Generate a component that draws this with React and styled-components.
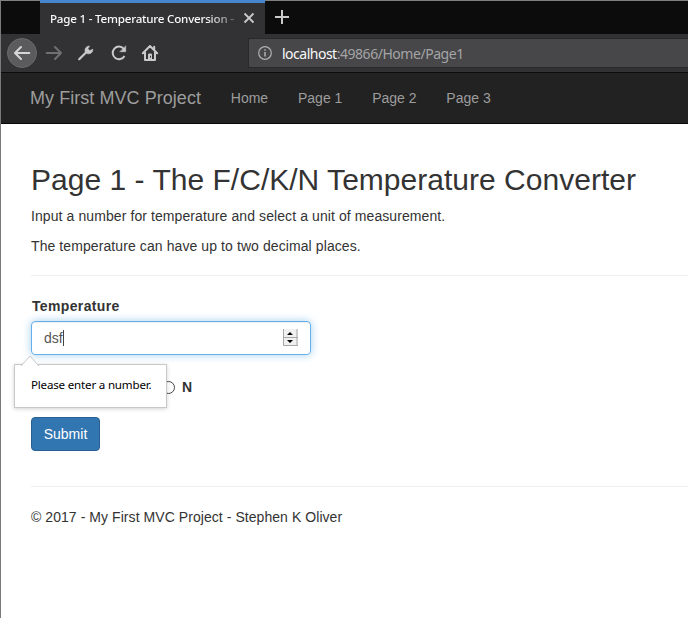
import React from 'react';
import styled, { createGlobalStyle } from 'styled-components';

const GlobalStyle = createGlobalStyle`
  * { box-sizing: border-box; }
  body { margin: 0; background: #fff; overflow: hidden; }
`;

const Window = styled.div`
  height: 618px;
  width: 688px;
  overflow: hidden;
  border-left: 1px solid #7b7b7b;
  background: #fff;
  color: #333;
  font: 14px/20px "Liberation Sans", Arial, sans-serif;
`;

const TabStrip = styled.div`
  display: flex;
  height: 34px;
  background: #0c0c0d;
  border-top: 1px solid #7f8080;
`;

const Tab = styled.div`
  display: flex;
  align-items: center;
  width: 225px;
  height: 34px;
  margin: -1px 0 0 39px;
  padding: 0 10px;
  border-top: 3px solid #4586cf;
  background: #323234;
`;

const TabTitle = styled.span`
  flex: none;
  width: 184px;
  overflow: hidden;
  white-space: nowrap;
  font: 500 11.6px/20px "Noto Sans", sans-serif;
  letter-spacing: -0.21px;
  color: #f9f9fa;
  mask-image: linear-gradient(to right, #000 156px, transparent 196px);
`;

const CloseIcon = styled.svg`
  flex: none;
  width: 12px;
  height: 12px;
  margin: -1px 0 0 9px;
`;

const PlusIcon = styled.svg`
  width: 16px;
  height: 16px;
  margin: 8px 0 0 9px;
`;

const Toolbar = styled.div`
  display: flex;
  align-items: center;
  height: 39px;
  padding-left: 6px;
  background: #323234;
  border-bottom: 1px solid #0c0c0d;
`;

const BackButton = styled.div`
  display: grid;
  place-items: center;
  width: 30px;
  height: 30px;
  border: 1px solid #6a6a6c;
  border-radius: 50%;
  background: #5b5b5d;
`;

const ToolIcon = styled.svg`
  flex: none;
  width: 18px;
  height: 18px;
  margin-left: ${(p) => p.$gap || 0}px;
  fill: none;
  stroke: ${(p) => p.$color || '#c9c9ca'};
  stroke-width: 2;
  stroke-linecap: round;
  stroke-linejoin: round;
`;

const AddressBar = styled.div`
  display: flex;
  align-items: center;
  flex: 1;
  height: 30px;
  margin-left: 89px;
  padding-left: 9px;
  background: #474749;
  border: 1px solid #29292a;
  border-right: 0;
  border-radius: 2px 0 0 2px;
`;

const InfoIcon = styled.svg`
  width: 14px;
  height: 14px;
  margin-right: 10px;
`;

const Url = styled.span`
  font: 14px/20px "Noto Sans", sans-serif;
  letter-spacing: -0.46px;
  color: #a4a4a6;
  padding-top: 1px;
`;

const Host = styled.span`
  color: #f9f9fa;
  letter-spacing: -0.5px;
`;

const Navbar = styled.nav`
  display: flex;
  align-items: center;
  height: 51px;
  padding: 0 0 0 29px;
  gap: 29.8px;
  background: #222;
  border-bottom: 1px solid #080808;
  color: #9d9d9d;
`;

const Brand = styled.span`
  font-size: 18px;
  letter-spacing: 0.05px;
`;

const NavLink = styled.span`
  font-size: 14px;
`;

const Content = styled.main`
  padding: 39px 0 0 30px;
`;

const Title = styled.h2`
  margin: 0 0 10px;
  font-size: 30px;
  font-weight: 400;
  line-height: 33px;
  letter-spacing: 0.02px;
  white-space: nowrap;
`;

const Paragraph = styled.p`
  margin: 0 0 10px;
  letter-spacing: ${(p) => p.$tracking || 0.09}px;
`;

const Divider = styled.hr`
  margin: ${(p) => p.$top}px 0 20px;
  border: 0;
  border-top: 1px solid #eee;
`;

const Label = styled.label`
  display: block;
  margin-bottom: 5px;
  padding-left: 1px;
  font-weight: 700;
  letter-spacing: 0.35px;
`;

const Field = styled.div`
  position: relative;
  display: flex;
  align-items: center;
  width: 280px;
  height: 34px;
  padding: 0 12px;
  border: 1px solid #66afe9;
  border-radius: 4px;
  box-shadow: inset 0 1px 1px rgba(0, 0, 0, 0.075), 0 0 8px rgba(102, 175, 233, 0.6);
  color: #555;
`;

const Caret = styled.span`
  width: 1px;
  height: 16px;
  background: #444;
`;

const Spinner = styled.svg`
  width: 15px;
  height: 18px;
  margin-left: auto;
`;

const Popup = styled.div`
  position: absolute;
  left: -18px;
  top: 42px;
  width: 153px;
  height: 44px;
  padding: 11px 0 0 16px;
  background: #fff;
  border: 1px solid #c8c8c8;
  box-shadow: 0 1px 4px rgba(0, 0, 0, 0.18);
  color: #000;
  white-space: nowrap;
  font: 11.6px/18px "Noto Sans", sans-serif;
  letter-spacing: -0.2px;
`;

const PopupArrow = styled.svg`
  position: absolute;
  left: 5px;
  top: -10px;
  width: 20px;
  height: 11px;
`;

const RadioRow = styled.div`
  display: flex;
  align-items: center;
  height: 20px;
  margin: 22px 0 20px;
  padding-left: 131px;
  font-weight: 700;
`;

const Radio = styled.span`
  width: 13px;
  height: 13px;
  margin-right: 7px;
  border: 1px solid #444;
  border-radius: 50%;
`;

const SubmitButton = styled.button`
  display: block;
  width: 69px;
  height: 34px;
  padding: 0;
  border: 1px solid #2a5f91;
  border-radius: 4px;
  background: #3276b1;
  color: #fff;
  font: 14px/20px "Liberation Sans", Arial, sans-serif;
`;

const links = ['Home', 'Page 1', 'Page 2', 'Page 3'];

export default function App() {
  return (
    <>
      <GlobalStyle />
      <Window>
        <TabStrip>
          <Tab>
            <TabTitle>Page 1 - Temperature Conversion -</TabTitle>
            <CloseIcon viewBox="0 0 12 12" stroke="#c9c9ca" strokeWidth="1.8">
              <path d="M1.5 1.5l9 9M10.5 1.5l-9 9" />
            </CloseIcon>
          </Tab>
          <PlusIcon viewBox="0 0 16 16" stroke="#c9c9ca" strokeWidth="2">
            <path d="M8 1v14M1 8h14" />
          </PlusIcon>
        </TabStrip>
        <Toolbar>
          <BackButton>
            <ToolIcon viewBox="0 0 18 18" $color="#d6d6d7">
              <path d="M16.3 9H2.2M8 3L2 9l6 6" />
            </ToolIcon>
          </BackButton>
          <ToolIcon viewBox="0 0 18 18" $gap={8} $color="#707072">
            <path d="M1.7 9h14M10 3l6 6-6 6" />
          </ToolIcon>
          <ToolIcon viewBox="0 0 18 18" $gap={14}>
            <path d="M2.2 15.2L10 7.5" strokeWidth="2.2" />
            <path
              d="M8 7.2C7.6 4.2 9.8 1.8 12.5 2.2L10.9 4.7l2 2L15.7 5.2C16.2 8.2 13.5 10.3 10.6 9.7Z"
              fill="#c9c9ca"
              strokeWidth="0.7"
            />
          </ToolIcon>
          <ToolIcon viewBox="0 0 18 18" $gap={15}>
            <path d="M14.5 12a6.3 6.3 0 1 1-.7-7.2" strokeLinecap="butt" />
            <path d="M15.7 2.2v5.5h-5.5z" fill="#c9c9ca" strokeWidth="0.6" />
          </ToolIcon>
          <ToolIcon viewBox="0 0 18 18" $gap={13}>
            <path d="M1.8 9.2L9 2l7.2 7.2M4 8.5V16h10V8.5M13.2 2.7v3" />
            <path d="M7.5 15.5V10h3v5.5" fill="#c9c9ca" strokeWidth="1" />
            <path d="M9.5 12.2v1" stroke="#323234" strokeWidth="1" />
          </ToolIcon>
          <AddressBar>
            <InfoIcon viewBox="0 0 14 14" fill="none" stroke="#b1b1b3" strokeWidth="1.2">
              <circle cx="7" cy="7" r="6.3" />
              <path d="M7 6v4.5M7 3.3v1.5" strokeWidth="1.5" />
            </InfoIcon>
            <Url>
              <Host>localhost</Host>:49866/Home/Page1
            </Url>
          </AddressBar>
        </Toolbar>
        <Navbar>
          <Brand>My First MVC Project</Brand>
          {links.map((text) => (
            <NavLink key={text}>{text}</NavLink>
          ))}
        </Navbar>
        <Content>
          <Title>Page 1 - The F/C/K/N Temperature Converter</Title>
          <Paragraph>Input a number for temperature and select a unit of measurement.</Paragraph>
          <Paragraph>The temperature can have up to two decimal places.</Paragraph>
          <Divider $top={19} />
          <Label>Temperature</Label>
          <Field>
            dsf
            <Caret />
            <Spinner viewBox="0 0 15 18">
              <path d="M0 0h15v17H0z" fill="#f0f0f0" />
              <path d="M.5 0v17M14 0v17M0 8.5h15M0 16.5h15" stroke="#a8a8a8" fill="none" />
              <path d="M4 6L7 3 10 6zM4 11h6l-3 3z" fill="#000" />
            </Spinner>
            <Popup>
              <PopupArrow viewBox="0 0 20 11">
                <path d="M1 11L10 1l9 10" fill="#fff" stroke="#c8c8c8" />
              </PopupArrow>
              Please enter a number.
            </Popup>
          </Field>
          <RadioRow>
            <Radio />N
          </RadioRow>
          <SubmitButton>Submit</SubmitButton>
          <Divider $top={35} />
          <Paragraph $tracking={0.06}>© 2017 - My First MVC Project - Stephen K Oliver</Paragraph>
        </Content>
      </Window>
    </>
  );
}
